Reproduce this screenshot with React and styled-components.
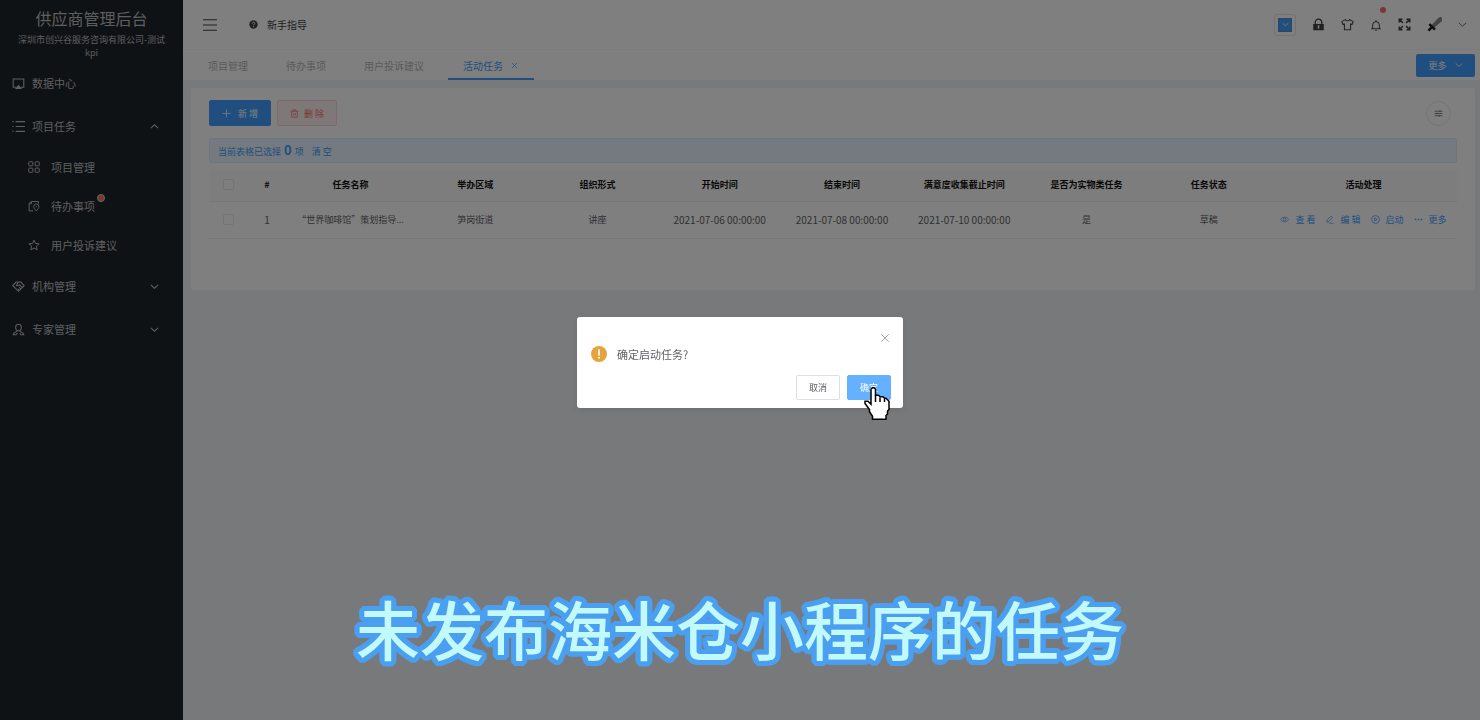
import React, { useState } from 'react';
import styled, { createGlobalStyle, css } from 'styled-components';

const icons = {
  monitor: (
    <>
      <path d="M5 12.5H1.5v-10h13v10H11" />
      <path d="M8 10.5l3 3.5H5z" fill="currentColor" />
    </>
  ),
  list: <path d="M4.5 2H16M4.5 8H16M4.5 14H16M.5 2h1.5M.5 8h1.5M.5 14h1.5" />,
  grid: (
    <>
      <rect x="1" y="1" width="5.500" height="5.500" rx="1" />
      <rect x="9.500" y="1" width="5.500" height="5.500" rx="1" />
      <rect x="1" y="9.500" width="5.500" height="5.500" rx="1" />
      <rect x="9.500" y="9.500" width="5.500" height="5.500" rx="1" />
    </>
  ),
  todo: (
    <>
      <path d="M7 14.5H1.5V4.5L4.5 2H14v3M4.5 2v3h-3" />
      <path d="M11 14.5c-2-2.200-3.500-3.700-3.500-5.700a3.500 3.500 0 0 1 7 0c0 2-1.500 3.500-3.500 5.700z" />
      <path d="M11 8v1.500" />
    </>
  ),
  star: (
    <path d="M8 1.500l2 4.400 4.800.5-3.600 3.200 1 4.800L8 12l-4.200 2.400 1-4.800L1.200 6.400 6 5.900z" />
  ),
  handshake: (
    <>
      <path d="M1 7l4-4.500h6L15 7l-7 7z" />
      <path d="M8 2.500L5.500 6.500c1 1 2.500.8 3.500-.5l4 3.500M7 11l2 1.500M9 9l2 2" />
    </>
  ),
  expert: (
    <>
      <path d="M8 1.500c2.200 0 3.500 1.600 3.500 3.700S10.200 9.500 8 9.500 4.500 7.300 4.500 5.200 5.800 1.500 8 1.500z" />
      <path d="M6.500 9.500c0 2-5 1.500-5 5H5l1.500-2M9.500 9.500c0 2 5 1.500 5 5H11l-1.500-2" />
    </>
  ),
  up: <path d="M1.500 11L8 5l6.500 6" />,
  down: <path d="M1.500 5L8 11l6.500-6" />,
  menu: <path d="M0 2h16M0 8h16M0 14h16" />,
  help: (
    <>
      <circle cx="8" cy="8" r="7.500" fill="currentColor" stroke="none" />
      <path d="M5.700 6.300c0-3 4.600-3 4.600 0 0 1.600-2.300 1.600-2.300 3.300M8 11v1.700" stroke="#fff" />
    </>
  ),
  lock: (
    <>
      <path d="M4 8V5.500a4 4 0 0 1 8 0V8" />
      <path fillRule="evenodd" d="M1.500 7.500h13V15h-13zM7 9v4h2V9z" fill="currentColor" stroke="none" />
    </>
  ),
  shirt: (
    <path d="M5.500 2L1 4.500 2.500 8l1.700-.7V14.500h7.600V7.300l1.700.7L15 4.500 10.500 2c-.8 2-4.200 2-5 0z" />
  ),
  bell: <path d="M1.500 13h13M3.500 13V8a4.500 4.500 0 0 1 9 0v5M8 3.500V1.500M7 15.200h2" />,
  full: (
    <path d="M1.500 5.500v-4h4M1.500 1.500L6 6M10.500 1.500h4v4M14.500 1.500L10 6M1.500 10.500v4h4M1.500 14.500L6 10M14.500 10.500v4h-4M14.500 14.500L10 10" />
  ),
  plus: <path d="M8 1v14M1 8h14" />,
  trash: <path d="M1 4h14M5.500 4V1.500h5V4M3 4v10.500h10V4M6.500 7v4.500M9.500 7v4.500" />,
  close: <path d="M2 2l12 12M14 2L2 14" />,
  filter: <path d="M1 4h14M1 8h14M1 12h14M10.500 2.500v3M5.500 6.500v3M9.500 10.500v3" />,
  view: (
    <>
      <path d="M.8 8C4 2.500 12 2.500 15.200 8 12 13.500 4 13.500.8 8z" />
      <circle cx="8" cy="8" r="2.300" />
    </>
  ),
  edit: <path d="M3 12.500l1-4L10.500 2l3 2.500L7 11.500l-4 1zM7 14.500h8" />,
  play: (
    <>
      <circle cx="8" cy="8" r="7" />
      <path d="M6.500 5l4.500 3-4.500 3z" />
    </>
  ),
  more: <path d="M1.500 8h2.500M6.800 8h2.500M12 8h2.500" strokeWidth="2.500" />,
  sword: (
    <>
      <path d="M14.500 0L16 1.200l-.7 3.300-8 7-2.500-2.500 7-7.500z" fill="#8b8b8b" stroke="#6c6c6c" strokeWidth=".5" />
      <path d="M2.500 7.500l6 6M5.500 10.500L1.500 14.500" stroke="#1c1c1c" strokeWidth="2.600" />
    </>
  )
};

const Icon = ({ name, size = 12, weight = 1.3 }) => (
  <Svg viewBox="0 0 16 16" $size={size} strokeWidth={weight} aria-hidden="true">
    {icons[name]}
  </Svg>
);

const menus = [
  { icon: 'monitor', label: '数据中心' },
  {
    icon: 'list',
    label: '项目任务',
    open: true,
    children: [
      { icon: 'grid', label: '项目管理' },
      { icon: 'todo', label: '待办事项', dot: true },
      { icon: 'star', label: '用户投诉建议' }
    ]
  },
  { icon: 'handshake', label: '机构管理', open: false },
  { icon: 'expert', label: '专家管理', open: false }
];

const tabs = ['项目管理', '待办事项', '用户投诉建议', '活动任务'];

const columns = [
  { title: '#', width: 40 },
  { title: '任务名称', width: 127 },
  { title: '举办区域' },
  { title: '组织形式' },
  { title: '开始时间' },
  { title: '结束时间' },
  { title: '满意度收集截止时间' },
  { title: '是否为实物类任务' },
  { title: '任务状态' },
  { title: '活动处理', width: 187 }
];

const rows = [
  {
    id: 1,
    cells: [
      '“世界咖啡馆”策划指导...',
      '笋岗街道',
      '讲座',
      '2021-07-06 00:00:00',
      '2021-07-08 00:00:00',
      '2021-07-10 00:00:00',
      '是',
      '草稿'
    ]
  }
];

const actions = [
  { icon: 'view', label: '查 看' },
  { icon: 'edit', label: '编 辑' },
  { icon: 'play', label: '启动' },
  { icon: 'more', label: '更多' }
];

const Sidebar = () => (
  <SidebarWrapper>
    <Brand>
      <BrandTitle>供应商管理后台</BrandTitle>
      <BrandCompany>深圳市创兴谷服务咨询有限公司-测试kpi</BrandCompany>
    </Brand>

    <nav>
      {menus.map(menu => (
        <React.Fragment key={menu.label}>
          <MenuLink href="#">
            <Icon name={menu.icon} size={13} />
            {menu.label}
            {menu.open !== undefined && (
              <MenuArrow>
                <Icon name={menu.open ? 'up' : 'down'} size={9} weight={1.8} />
              </MenuArrow>
            )}
          </MenuLink>

          {menu.children?.map(item => (
            <SubMenuLink href="#" key={item.label}>
              <Icon name={item.icon} />
              <DotHolder>
                {item.label}
                {item.dot && <MenuDot />}
              </DotHolder>
            </SubMenuLink>
          ))}
        </React.Fragment>
      ))}
    </nav>
  </SidebarWrapper>
);

const TopBar = () => (
  <TopBarWrapper>
    <IconButton aria-label="收起菜单">
      <Icon name="menu" size={14} />
    </IconButton>

    <GuideLink href="#">
      <Icon name="help" size={9} weight={1.6} />
      新手指导
    </GuideLink>

    <Tools>
      <ColorPicker aria-label="主题色">
        <ColorBlock>
          <Icon name="down" size={7} weight={2} />
        </ColorBlock>
      </ColorPicker>
      <IconButton aria-label="锁屏">
        <Icon name="lock" size={13} weight={1.6} />
      </IconButton>
      <IconButton aria-label="主题">
        <Icon name="shirt" size={13} />
      </IconButton>
      <IconButton aria-label="消息">
        <Icon name="bell" size={12} />
        <BellDot />
      </IconButton>
      <IconButton aria-label="全屏">
        <Icon name="full" size={13} weight={1.8} />
      </IconButton>
      <IconButton aria-label="用户">
        <Icon name="sword" size={15} />
      </IconButton>
      <IconButton aria-label="用户菜单">
        <Icon name="down" size={9} />
      </IconButton>
    </Tools>
  </TopBarWrapper>
);

const TaskTable = () => (
  <Table>
    <colgroup>
      <col width="38" />
      {columns.map(column => (
        <col key={column.title} width={column.width} />
      ))}
    </colgroup>

    <thead>
      <tr>
        <HeadCell>
          <Checkbox aria-label="全选" />
        </HeadCell>
        {columns.map(column => (
          <HeadCell key={column.title}>{column.title}</HeadCell>
        ))}
      </tr>
    </thead>

    <tbody>
      {rows.map(row => (
        <tr key={row.id}>
          <Cell>
            <Checkbox aria-label={`选择第${row.id}行`} />
          </Cell>
          <Cell $date>{row.id}</Cell>
          {row.cells.map((cell, index) => (
            <Cell key={index} $date={/^\d{4}-/.test(cell)}>
              {cell}
            </Cell>
          ))}
          <Cell>
            <Actions>
              {actions.map(action => (
                <ActionButton key={action.label}>
                  <Icon name={action.icon} size={9} />
                  {action.label}
                </ActionButton>
              ))}
            </Actions>
          </Cell>
        </tr>
      ))}
    </tbody>
  </Table>
);

const ConfirmDialog = ({ message }) => (
  <Overlay>
    <Dialog role="dialog" aria-modal="true" aria-label={message}>
      <DialogHeader>
        <CloseButton aria-label="关闭">
          <Icon name="close" size={10} />
        </CloseButton>
      </DialogHeader>

      <DialogContent>
        <WarningIcon viewBox="0 0 16 16" aria-hidden="true">
          <circle cx="8" cy="8" r="8" fill="#e6a23c" />
          <path d="M8 4v5" stroke="#fff" strokeWidth="1.600" strokeLinecap="round" />
          <circle cx="8" cy="11.700" r="1" fill="#fff" />
        </WarningIcon>
        {message}
      </DialogContent>

      <DialogFooter>
        <DialogButton>取消</DialogButton>
        <DialogButton $primary>
          确定
          <HandCursor viewBox="0 0 17 22" aria-hidden="true">
            <path
              d="M4.500 1.500l1-1h1l1 1v4h2l1 1h2l1 1h1l2 2V15l-1 1v2l-1 1v2.500h-9v-2l-2-3V15l-3-4V9.500h2l2 2z"
              fill="#fff"
              stroke="#000"
            />
            <path d="M7.500 5.500V10M10.500 7v3M13.500 8v2" fill="none" stroke="#000" />
          </HandCursor>
        </DialogButton>
      </DialogFooter>
    </Dialog>
  </Overlay>
);

const App = () => {
  const [active, setActive] = useState('活动任务');

  return (
    <>
      <GlobalStyle />
      <Layout>
        <Sidebar />

        <Main>
          <TopBar />

          <TabBar>
            {tabs.map(tab => (
              <Tab key={tab} $active={tab === active} onClick={() => setActive(tab)}>
                {tab}
                {tab === active && <Icon name="close" size={7} weight={1.6} />}
              </Tab>
            ))}
            <MoreButton>
              更多
              <Icon name="down" size={8} weight={1.6} />
            </MoreButton>
          </TabBar>

          <Card>
            <Toolbar>
              <ToolButton $primary>
                <Icon name="plus" size={9} />
                新 增
              </ToolButton>
              <ToolButton>
                <Icon name="trash" size={9} />
                删 除
              </ToolButton>
              <RoundButton aria-label="筛选">
                <Icon name="filter" size={9} />
              </RoundButton>
            </Toolbar>

            <Selection>
              <span>
                当前表格已选择 <Count>0</Count> 项
              </span>
              <ClearButton>清 空</ClearButton>
            </Selection>

            <TaskTable />
          </Card>
        </Main>
      </Layout>

      <ConfirmDialog message="确定启动任务?" />
      <Caption>未发布海米仓小程序的任务</Caption>
    </>
  );
};

// round outline: shadows on a ring, plus a smaller ring to close the gaps
const outline = [
  [5, 0], [5, 2], [4, 3], [3, 4], [2, 5], [0, 5], [3, 0], [2, 2], [0, 3]
]
  .flatMap(([x, y]) => [[x, y], [-x, y], [x, -y], [-x, -y]])
  .map(([x, y]) => `${x}px ${y}px 0 #4a9ff0`)
  .join(', ');

const GlobalStyle = createGlobalStyle`
  * {
    box-sizing: border-box;
  }

  body {
    margin: 0;
    background: #f0f2f5;
    color: #606266;
    font-family: 'Noto Sans CJK SC', 'Liberation Sans', sans-serif;
    font-size: 10px;
  }

  button {
    padding: 0;
    border: 0;
    background: none;
    color: inherit;
    font: inherit;
    cursor: pointer;
  }

  a {
    color: inherit;
    text-decoration: none;
  }
`;

const Svg = styled.svg`
  flex: none;
  display: block;
  width: ${props => props.$size}px;
  height: ${props => props.$size}px;
  fill: none;
  stroke: currentColor;
`;

const Layout = styled.div`
  display: flex;
  min-height: 100vh;
`;

const SidebarWrapper = styled.aside`
  flex: none;
  width: 183px;
  background: #1f2428;
  color: #b9bcbf;
`;

const Brand = styled.div`
  padding: 7px 12px 3px;
  text-align: center;
`;

const BrandTitle = styled.div`
  margin-bottom: 4px;
  font-size: 16px;
  line-height: 22px;
`;

const BrandCompany = styled.div`
  font-size: 9px;
  line-height: 13px;
`;

const MenuLink = styled.a`
  display: flex;
  align-items: center;
  gap: 7px;
  height: 43px;
  padding: 0 24px 1px 12px;
  font-size: 11px;
`;

const SubMenuLink = styled(MenuLink)`
  gap: 11px;
  height: 39px;
  padding-left: 28px;
`;

const MenuArrow = styled.span`
  margin-left: auto;
`;

const DotHolder = styled.span`
  position: relative;
`;

const Dot = styled.i`
  position: absolute;
  border-radius: 50%;
  background: #f56c6c;
`;

const MenuDot = styled(Dot)`
  top: -4px;
  right: -10px;
  width: 8px;
  height: 8px;
  border: 1px solid #d8c8c8;
`;

const Main = styled.main`
  flex: 1;
  min-width: 0;
`;

const TopBarWrapper = styled.header`
  display: flex;
  align-items: center;
  height: 50px;
  padding: 0 13px 0 20px;
  border-bottom: 1px solid #f6f6f6;
  background: #fff;
  color: #404246;
`;

const IconButton = styled.button`
  position: relative;
`;

const GuideLink = styled.a`
  display: flex;
  align-items: center;
  gap: 9px;
  margin-left: 32px;
`;

const Tools = styled.div`
  display: flex;
  align-items: center;
  gap: 16px;
  margin-left: auto;
`;

const ColorPicker = styled.button`
  padding: 3px;
  border: 1px solid #e6e6e6;
  border-radius: 3px;
`;

const ColorBlock = styled.span`
  display: grid;
  place-items: center;
  width: 14px;
  height: 14px;
  border: 1px solid #5f8cba;
  background: #409eff;
  color: #fff;
`;

const BellDot = styled(Dot)`
  top: -12px;
  right: -4px;
  width: 6px;
  height: 6px;
`;

const TabBar = styled.div`
  display: flex;
  align-items: center;
  height: 30px;
  padding: 0 5px 0 6px;
  background: #fff;
`;

const Tab = styled.button`
  display: flex;
  align-items: center;
  gap: 8px;
  height: 30px;
  padding: 0 19px;
  color: #b4b4b4;

  ${props =>
    props.$active &&
    css`
      margin-left: 5px;
      padding: 2px 16px 0 15px;
      border-bottom: 2px solid #409eff;
      color: #409eff;
    `}
`;

const MoreButton = styled.button`
  display: flex;
  align-items: center;
  justify-content: center;
  gap: 8px;
  width: 59px;
  height: 23px;
  margin-left: auto;
  border-radius: 2px;
  background: #409eff;
  color: #fff;
  font-size: 9px;
`;

const Card = styled.section`
  margin: 8px 5px 0 8px;
  padding: 12px 18px 51px;
  border-radius: 3px;
  background: #fff;
`;

const Toolbar = styled.div`
  display: flex;
  align-items: center;
  gap: 6px;
  margin-bottom: 12px;
`;

const ToolButton = styled.button`
  display: flex;
  align-items: center;
  justify-content: center;
  gap: 5px;
  width: 60px;
  height: 26px;
  border: 1px solid #fbd4d4;
  border-radius: 2px;
  background: #fef0f0;
  color: #f56c6c;
  font-size: 9px;

  ${props =>
    props.$primary &&
    css`
      gap: 7px;
      width: 62px;
      border-color: #409eff;
      background: #409eff;
      color: #fff;
    `}
`;

const RoundButton = styled.button`
  display: grid;
  place-items: center;
  width: 25px;
  height: 25px;
  margin: 0 6px 0 auto;
  border: 1px solid #e8eaee;
  border-radius: 50%;
`;

const Selection = styled.div`
  display: flex;
  align-items: center;
  gap: 8px;
  height: 25px;
  margin-bottom: 6px;
  padding: 0 8px;
  border: 1px solid #dcebf8;
  border-radius: 2px;
  background: #e8f4ff;
  color: #409eff;
  font-size: 9px;
`;

const Count = styled.b`
  margin: 0 1px;
  font-size: 13px;
  line-height: 13px;
`;

const ClearButton = styled.button`
  padding-top: 1px;
`;

const Table = styled.table`
  width: 100%;
  border-collapse: collapse;
  table-layout: fixed;
  font-size: 9px;
`;

const HeadCell = styled.th`
  height: 32px;
  padding: 0;
  border-bottom: 1px solid #ebeef5;
  background: #fafafa;
  color: #111;
  font-weight: bold;
`;

const Cell = styled.td`
  height: 37px;
  padding: 0 0 1px;
  border-bottom: 1px solid #ebeef5;
  font-size: ${props => (props.$date ? 10 : 9)}px;
  text-align: center;
  white-space: nowrap;
`;

const Checkbox = styled.input.attrs({ type: 'checkbox' })`
  display: block;
  width: 11px;
  height: 11px;
  margin: 0 auto;
  border: 1px solid #e6e8ec;
  border-radius: 2px;
  background: #fff;
  appearance: none;
`;

const Actions = styled.div`
  display: flex;
  justify-content: center;
  gap: 10px;
  color: #409eff;
`;

const ActionButton = styled.button`
  display: flex;
  align-items: center;
  gap: 6px;
`;

const Overlay = styled.div`
  position: fixed;
  inset: 0;
  display: flex;
  align-items: center;
  justify-content: center;
  padding-top: 5px;
  background: rgba(0, 0, 0, 0.5);
`;

const Dialog = styled.div`
  width: 326px;
  padding: 0 12px 8px 14px;
  border-radius: 3px;
  background: #fff;
  box-shadow: 0 2px 9px rgba(0, 0, 0, 0.1);
`;

const DialogHeader = styled.div`
  display: flex;
  justify-content: flex-end;
  padding: 16px 1px 1px 0;
`;

const CloseButton = styled.button`
  color: #909399;
`;

const DialogContent = styled.div`
  display: flex;
  align-items: center;
  gap: 10px;
  margin-bottom: 11px;
  font-size: 11px;
  line-height: 20px;
`;

const WarningIcon = styled.svg`
  width: 16px;
  height: 16px;
`;

const DialogFooter = styled.div`
  display: flex;
  justify-content: flex-end;
  gap: 7px;
`;

const DialogButton = styled.button`
  position: relative;
  width: 44px;
  height: 25px;
  border: 1px solid ${props => (props.$primary ? '#66b1ff' : '#dcdfe6')};
  border-radius: 2px;
  background: ${props => (props.$primary ? '#66b1ff' : '#fff')};
  color: ${props => (props.$primary ? '#fff' : '#606266')};
  font-size: 9px;
`;

const HandCursor = styled.svg`
  position: absolute;
  top: 11px;
  left: 16px;
  width: 26px;
  height: 33px;
  pointer-events: none;
`;

const Caption = styled.div`
  position: fixed;
  right: 0;
  bottom: 45px;
  left: 0;
  color: #c2f9fb;
  font-size: 64px;
  font-weight: 500;
  line-height: 96px;
  text-align: center;
  text-shadow: ${outline};
  pointer-events: none;
`;

export default App;
